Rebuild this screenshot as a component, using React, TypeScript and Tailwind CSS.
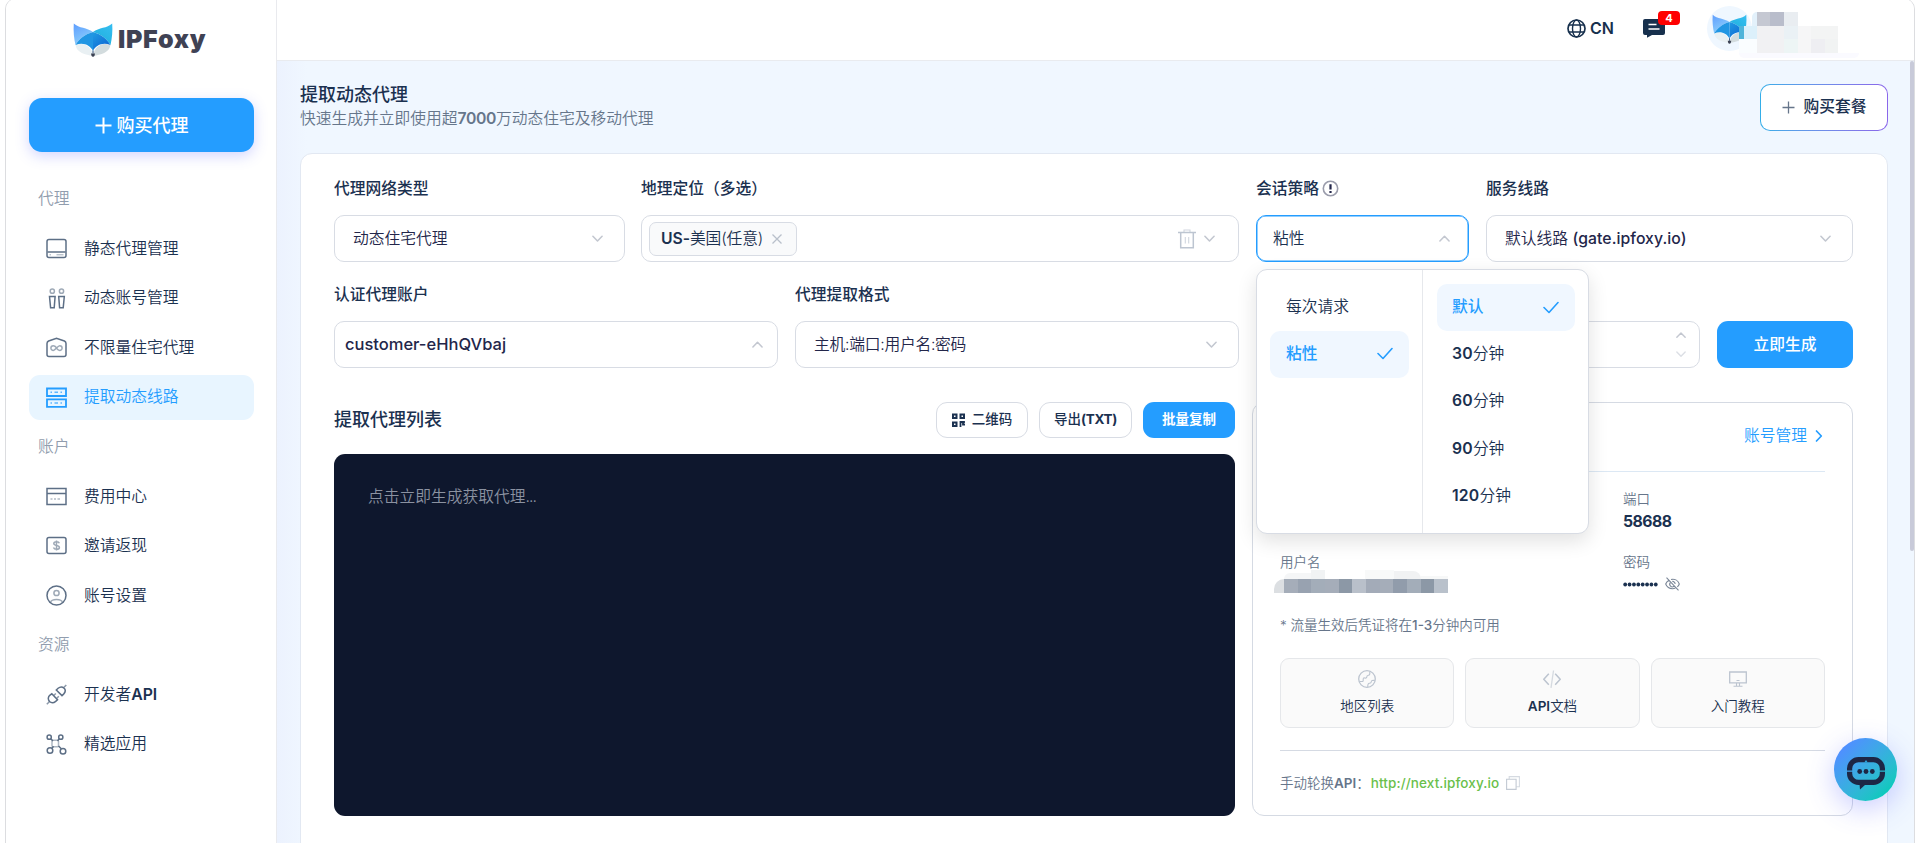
import { type ReactNode } from "react";

const fontStack = "font-['Inter','Noto_Sans_CJK_SC',sans-serif]";

function FoxLogo({ className, id }: { className: string; id: string }) {
  return (
    <svg className={className} viewBox="0 0 40 34" fill="none">
      <defs>
        <linearGradient id={`${id}-a`} x1="0" y1="0" x2="12" y2="22" gradientUnits="userSpaceOnUse">
          <stop stopColor="#5c9bff" />
          <stop offset="1" stopColor="#8fd3fb" />
        </linearGradient>
        <linearGradient id={`${id}-b`} x1="38" y1="2" x2="24" y2="20" gradientUnits="userSpaceOnUse">
          <stop stopColor="#35bdf0" />
          <stop offset="1" stopColor="#1fb0dd" />
        </linearGradient>
        <linearGradient id={`${id}-c`} x1="14" y1="10" x2="28" y2="26" gradientUnits="userSpaceOnUse">
          <stop stopColor="#23a3e6" />
          <stop offset="1" stopColor="#1170d6" />
        </linearGradient>
      </defs>
      <path d="M.8.6C6 5.500 14 4.500 20 9c-8 2-14 7-17.500 13C1 16 .2 8 .8.6Z" fill={`url(#${id}-a)`} />
      <path d="M39.200.6C34 5.500 26 4.500 20 9c8 2 14 7 17.500 13C39 16 39.800 8 39.200.6Z" fill={`url(#${id}-b)`} />
      <path d="M2.500 22C8 19.500 16 21 19 29l1 4C12 31.500 4 30 2.500 22Z" fill="#e9f0f3" />
      <path d="M37.500 22C32 19.500 24 21 21 29l-1 4c8-1.500 16-3 17.500-11Z" fill="#d3dcde" />
      <path d="M20 9C12 11 6 16 2.500 22 10 19 17 22 20 28Z" fill="#2196e3" />
      <path d="M20 9c8 2 14 7 17.500 13C30 19 23 22 20 28Z" fill={`url(#${id}-c)`} />
      <path d="M20 27.500v3" stroke="#2a4d78" strokeWidth="1" />
      <path d="M18 30.500h4l-.5 2.200a1.600 1.600 0 0 1-3 0Z" fill="#3b4152" />
    </svg>
  );
}

type ChevronProps = { dir?: "down" | "up" | "right"; className?: string; size?: number };

function Chevron({ dir = "down", className = "text-[#c3c7d0]", size = 11 }: ChevronProps) {
  const paths = { down: "M1 3.500 6 8.700l5-5.200", up: "M1 8.700 6 3.500l5 5.200", right: "M3.500 1l4.800 5-4.800 5" };
  return (
    <svg width={size} height={size} viewBox="0 0 12 12" fill="none" className={`shrink-0 overflow-visible ${className}`}>
      <path d={paths[dir]} stroke="currentColor" strokeWidth="1.7" strokeLinecap="round" strokeLinejoin="round" />
    </svg>
  );
}

function Check() {
  return (
    <svg width="16" height="13" viewBox="0 0 16 13" fill="none" className="text-[#249dff]">
      <path d="M1 6.500l5 5L15 1.500" stroke="currentColor" strokeWidth="1.600" strokeLinecap="round" strokeLinejoin="round" />
    </svg>
  );
}

const icons: Record<string, ReactNode> = {
  disk: (
    <>
      <rect x="1" y="1.500" width="19" height="18" rx="2" />
      <path d="M1.500 14h18" />
      <path d="M3.500 16.800h1.500M10.500 16.800h7" strokeWidth="1" opacity=".6" />
    </>
  ),
  people: (
    <>
      <circle cx="6.300" cy="3.200" r="2.100" opacity=".6" />
      <circle cx="15.500" cy="3.200" r="2.100" opacity=".6" />
      <path d="M3.500 8.500h5.600l-.9 11.200H4.600ZM12.700 8.500h5.600l-1.100 11.200h-3.600Z" />
    </>
  ),
  home: (
    <>
      <path d="M1 6.500Q1 4.800 2.600 4L10.500 1.200 18.400 4Q20 4.800 20 6.500V17.500a2 2 0 0 1-2 2H3a2 2 0 0 1-2-2Z" />
      <path d="M10.500 10.800c-1-1.300-2-2.100-3.200-2.100a2.400 2.400 0 0 0 0 4.800c2 0 4.400-4.800 6.400-4.800a2.400 2.400 0 0 1 0 4.800c-1.200 0-2.200-.9-3.200-2.200" opacity=".6" />
    </>
  ),
  server: (
    <>
      <path d="M1 1.500h19v7.500H1ZM1 12.300h19v7.500H1Z" strokeWidth="1.8" />
      <path d="M4.500 5.200h1.500M8.500 5.200h3.500M14.500 5.200H16M4.500 16h1.500M8.500 16h3.500M14.500 16H16" opacity=".7" />
    </>
  ),
  card: (
    <>
      <path d="M1 2.500h19v16H1ZM1 7.500h19" />
      <path d="M4.500 13h2M8 13h2M11.500 13h2.500" strokeWidth="1.200" opacity=".7" />
    </>
  ),
  money: (
    <>
      <rect x="1" y="2.500" width="19" height="16" rx="2" />
      <path d="M13.300 8.300c-.3-1.200-1.500-1.600-2.800-1.600-1.600 0-2.700.7-2.700 1.900 0 2.600 5.600 1.200 5.600 3.800 0 1.200-1.200 1.900-2.900 1.900-1.500 0-2.600-.6-3-1.700M10.500 5.500v10" opacity=".6" />
    </>
  ),
  user: (
    <>
      <circle cx="10.500" cy="10.500" r="9.500" />
      <circle cx="10.500" cy="8" r="2.600" opacity=".6" />
      <path d="M4.500 17.500c1-4 11-4 12 0" opacity=".6" />
    </>
  ),
  plug: (
    <>
      <path d="M3.500 17.500c-1.800-2.200-1.500-4.800.5-6.300l1.800-1.400 5.700 6-1.800 1.500c-2 1.700-4.500 1.700-6.200.2ZM10.300 6l1.800-1.700c1.900-1.600 4.200-1.700 5.900-.2 1.600 1.700 1.400 4.200-.4 6l-1.600 1.500Z" />
      <path d="M.8 20.200l2.500-2.500M18 3.300 20.300 1M7.800 11.500l2-2M10.800 14.200l2-2" opacity=".7" />
    </>
  ),
  nodes: (
    <>
      <circle cx="3.200" cy="3.200" r="2.100" />
      <circle cx="14.800" cy="3.200" r="2.100" />
      <circle cx="4" cy="16.500" r="2.800" />
      <circle cx="17" cy="17.300" r="2.800" />
      <path d="M4.800 4.800 7 7M13.200 4.800 11.500 7M6 14.300l1.500-2M15.300 14.800 12.500 12" />
      <rect x="6" y="6.300" width="6.500" height="6.500" rx="1" opacity=".5" />
    </>
  ),
};

type Row = { label: string; icon?: string; suffix?: string; active?: boolean };

const menu: Row[] = [
  { label: "代理" },
  { label: "静态代理管理", icon: "disk" },
  { label: "动态账号管理", icon: "people" },
  { label: "不限量住宅代理", icon: "home" },
  { label: "提取动态线路", icon: "server", active: true },
  { label: "账户" },
  { label: "费用中心", icon: "card" },
  { label: "邀请返现", icon: "money" },
  { label: "账号设置", icon: "user" },
  { label: "资源" },
  { label: "开发者", suffix: "API", icon: "plug" },
  { label: "精选应用", icon: "nodes" },
];

function Sidebar() {
  return (
    <aside className="flex h-full w-[271px] shrink-0 flex-col border-r border-[#e9eaee] bg-white pr-[22px] pl-[23px]">
      <div className="mt-[22px] flex h-[35px] items-center pl-[44px]">
        <FoxLogo id="side" className="h-[34px] w-10" />
        <span className="-mt-px ml-[5px] text-[25px] leading-none font-black tracking-[0.7px] text-[#3f4254]">IPFoxy</span>
      </div>
      <button className="mt-[41px] flex h-[54px] shrink-0 items-center justify-center gap-[5px] rounded-[13px] bg-[#249dff] text-[18px] font-medium text-white shadow-[0_4px_14px_rgba(80,90,255,0.25)]">
        <svg width="17" height="17" viewBox="0 0 17 17" className="stroke-white stroke-2">
          <path d="M8.500.5v16M.5 8.500h16" />
        </svg>
        购买代理
      </button>
      <nav className="mt-[22.3px] flex flex-col text-[15.75px]">
        {menu.map((item) =>
          item.icon ? (
            <div key={item.label} className="flex h-[49.55px] items-center">
              <div
                className={`flex h-[44.6px] w-full items-center rounded-[11px] pl-[17px] ${
                  item.active ? "bg-[#e8f5ff] text-[#249dff]" : "text-[#1b3150]"
                }`}
              >
                <svg
                  width="21"
                  height="21"
                  viewBox="0 0 21 21"
                  fill="none"
                  stroke="currentColor"
                  strokeWidth="1.5"
                  className={item.active ? "text-[#249dff]" : "text-[#5d6f86]"}
                >
                  {icons[item.icon]}
                </svg>
                <span className="ml-[17px]">
                  {item.label}
                  {item.suffix && <span className="font-semibold">{item.suffix}</span>}
                </span>
              </div>
            </div>
          ) : (
            <div key={item.label} className="flex h-[49.55px] items-center pl-[9px] text-[#919dae]">
              {item.label}
            </div>
          ),
        )}
      </nav>
    </aside>
  );
}

function Header() {
  return (
    <header className="flex h-[61px] shrink-0 items-start border-b border-[#e9ebef] bg-white">
      <div className="ml-[1290px] flex h-[56px] items-center text-[#17304d]">
        <svg width="19" height="19" viewBox="0 0 19 19" fill="none" stroke="currentColor" strokeWidth="1.4">
          <circle cx="9.500" cy="9.500" r="8.500" strokeWidth="1.7" />
          <ellipse cx="9.500" cy="9.500" rx="4" ry="8.500" />
          <path d="M2 6h15M2 13h15" />
        </svg>
        <span className="ml-1 text-[16px] font-semibold">CN</span>
      </div>
      <div className="relative mt-[19px] ml-[29px]">
        <svg width="22" height="19" viewBox="0 0 22 19" className="text-[#17304d]">
          <path d="M2 0h18a2 2 0 0 1 2 2v12a2 2 0 0 1-2 2H9l-5 2.800V16H2a2 2 0 0 1-2-2V2A2 2 0 0 1 2 0Z" fill="currentColor" />
          <path d="M5.500 5.500h8M5.500 10h11" stroke="#fff" strokeWidth="1.7" />
        </svg>
        <span className="absolute -top-2 left-[15px] flex h-[14px] w-[22px] items-center justify-center rounded-[4px] bg-[#ff0000] text-[11px] font-bold text-white">
          4
        </span>
      </div>
      <div className="mt-1.5 ml-[42px] flex h-[45px] w-[45px] shrink-0 items-center justify-center rounded-full bg-[#eff7ff]">
        <FoxLogo id="avatar" className="h-[30px] w-[35px]" />
      </div>
      {/* masked account name */}
      <div className="mt-3 -ml-[13px] flex flex-col">
        <div className="ml-[13px] flex h-[14px]">
          <i className="w-[5px] rounded-tl-md bg-[#e3f1fb]" />
          <i className="w-[13px] bg-[#c5c8d2]" />
          <i className="w-[14px] bg-[#b9bdcb]" />
          <i className="w-[14px] bg-[#e9edf1]" />
        </div>
        <div className="flex h-[13px]">
          <i className="w-[5px] bg-[#4fb4da]" />
          <i className="w-[13px] bg-[#dcf0fb]" />
          <i className="w-[27px] bg-[#f1f1f3]" />
          <i className="w-[14px] bg-[#eaf1f5]" />
          <i className="w-[13px] bg-[#f6f6f7]" />
          <i className="w-[27px] bg-[#f3f4f4]" />
        </div>
        <div className="flex h-[14px]">
          <i className="w-[18px] bg-[#fafdff]" />
          <i className="w-[27px] bg-[#f1f1f3]" />
          <i className="w-[14px] bg-[#edf5f5]" />
          <i className="w-[13px] bg-[#f6f6f7]" />
          <i className="w-[14px] bg-[#eeeef2]" />
          <i className="w-[13px] bg-[#f1f3f3]" />
        </div>
        <div className="h-[5px] w-[120px] rounded-b-full bg-[#fafaff]" />
      </div>
    </header>
  );
}

function Label({ children }: { children?: ReactNode }) {
  return <div className="flex h-[27px] items-center text-[15.75px] font-medium text-[#1b3150]">{children}</div>;
}

type SelectProps = { children: ReactNode; dir?: "up" | "down"; className?: string };

function SelectBox({ children, dir, className = "pl-[18px] pr-[21px]" }: SelectProps) {
  return (
    <div className={`mt-[13px] flex h-[47px] items-center justify-between rounded-[10px] border border-[#d8dce4] bg-white text-[15.75px] text-[#23264a] ${className}`}>
      {children}
      <Chevron dir={dir} />
    </div>
  );
}

function SessionMenu() {
  return (
    <div className="absolute top-[94px] left-0 z-20 flex h-[265px] w-[333px] rounded-[11px] border border-[#d8dce4] bg-white text-[15.75px] text-[#1b3150] shadow-[0_7px_20px_rgba(0,0,0,0.12)]">
      <div className="w-[166px] border-r border-[#e6e8ec] px-[13px] pt-[14px]">
        <div className="flex h-[47px] items-center px-4 pb-px">每次请求</div>
        <div className="flex h-[47px] items-center justify-between rounded-[10px] bg-[#f0f7ff] px-4 pb-0.5 font-medium text-[#249dff]">
          粘性 <Check />
        </div>
      </div>
      <div className="flex-1 pt-[14px] pr-[13px] pl-[14px]">
        <div className="flex h-[47px] items-center justify-between rounded-[10px] bg-[#f0f7ff] pr-4 pb-px pl-[15px] font-medium text-[#249dff]">
          默认 <Check />
        </div>
        <div className="-mt-px">
          {["30", "60", "90", "120"].map((m) => (
            <div key={m} className="flex h-[47.4px] items-center px-[15px]">
              <span className="font-semibold tracking-[0.2px]">{m}</span>分钟
            </div>
          ))}
        </div>
      </div>
    </div>
  );
}

function Filters() {
  return (
    <>
      <div className="flex gap-[17px]">
        <div className="w-[291px]">
          <Label>代理网络类型</Label>
          <SelectBox>动态住宅代理</SelectBox>
        </div>
        <div className="-ml-px w-[598px]">
          <Label>地理定位（多选）</Label>
          <SelectBox className="pr-[23px] pl-[7px]">
            <div className="flex h-[34px] w-[148px] items-center justify-between rounded-[7px] border border-[#d8dce4] bg-[#f9fafb] pr-[14px] pl-[11px] text-[#1b3150]">
              <span className="tracking-[-0.1px]">
                <span className="font-semibold">US-</span>美国(任意)
              </span>
              <svg width="10" height="10" viewBox="0 0 10 10" className="stroke-[#b9c0ca]" strokeWidth="1.3">
                <path d="M.5.5l9 9M9.500.5l-9 9" />
              </svg>
            </div>
            <svg width="18" height="20" viewBox="0 0 18 20" fill="none" stroke="#bdc5d1" strokeWidth="1.5" className="mr-2 ml-auto">
              <path d="M0 3.500h18M2.700 3.500v15.300h12.600V3.500" />
              <path d="M6 3.500V1h6v2.500M7.300 8v6.500M10.700 8v6.500" strokeWidth="1.1" opacity=".7" />
            </svg>
          </SelectBox>
        </div>
        <div className="relative w-[213px]">
          <Label>
            会话策略
            <svg width="17" height="17" viewBox="0 0 17 17" fill="none" className="ml-[3px]">
              <circle cx="8.500" cy="8.500" r="7.200" stroke="#9a9cab" strokeWidth="1.6" />
              <path d="M8.500 4.300v5.200M8.500 11v2" stroke="#23264a" strokeWidth="2.2" />
            </svg>
          </Label>
          <div className="mt-[13px] flex h-[47px] items-center justify-between rounded-[10px] border-[1.5px] border-[#249dff] bg-white pr-[18px] pl-4 text-[15.75px] text-[#1b3150] ring-[0.5px] ring-[#249dff] ring-inset">
            粘性 <Chevron dir="up" />
          </div>
          <SessionMenu />
        </div>
        <div className="w-[367px]">
          <Label>服务线路</Label>
          <SelectBox>
            <span>
              默认线路 <span className="font-medium tracking-[0.05px]">(gate.ipfoxy.io)</span>
            </span>
          </SelectBox>
        </div>
      </div>

      <div className="mt-[19px] flex gap-[17px]">
        <div className="w-[444px]">
          <Label>认证代理账户</Label>
          <SelectBox dir="up" className="pr-[14px] pl-[10px]">
            <span className="text-[16.5px] font-medium">customer-eHhQVbaj</span>
          </SelectBox>
        </div>
        <div className="w-[444px]">
          <Label>代理提取格式</Label>
          <SelectBox>
            <span className="tracking-[-0.25px]">主机:端口:用户名:密码</span>
          </SelectBox>
        </div>
        <div className="w-[444px]">
          <Label />
          <div className="mt-[13px] flex h-[47px] flex-col items-end justify-center gap-[9px] rounded-[10px] border border-[#d8dce4] pr-[13px]">
            <Chevron dir="up" size={10} />
            <Chevron size={10} className="text-[#dcdfe5]" />
          </div>
        </div>
        <button className="mt-10 h-[47px] w-[136px] rounded-[11px] bg-[#249dff] text-[15.75px] font-medium text-white">立即生成</button>
      </div>
    </>
  );
}

function ResultList() {
  return (
    <div className="w-[901px]">
      <div className="flex h-9 items-center text-[13.5px] font-medium text-[#1b3150]">
        <h2 className="mr-auto pb-px text-[18px] font-medium">提取代理列表</h2>
        <button className="flex h-9 w-[92px] items-center justify-center gap-[7px] rounded-[11px] border border-[#d8dce4] pb-px">
          <svg width="13" height="14" viewBox="0 0 13 14" fill="none" stroke="currentColor" strokeWidth="2">
            <path d="M1 1.500h3.500V5H1ZM8.500 1.500H12V5H8.500ZM1 9.500h3.500V13H1Z" />
            <path d="M8.500 14V9H11v2.500h2M12 8v2" strokeWidth="1.8" />
          </svg>
          二维码
        </button>
        <button className="ml-[11px] h-9 w-[93px] rounded-[11px] border border-[#d8dce4] pb-px">
          导出<span className="font-bold tracking-[-0.3px]">(TXT)</span>
        </button>
        <button className="ml-[11px] h-9 w-[92px] rounded-[11px] bg-[#249dff] pb-px font-bold text-white">批量复制</button>
      </div>
      <div className="mt-4 h-[362px] rounded-[11px] bg-[#0e172d] px-[34px] pt-[31px] text-[15.75px] text-[#8b92a1]">
        点击立即生成获取代理<span className="tracking-[-0.9px]">...</span>
      </div>
    </div>
  );
}

const docs: { label: ReactNode; key: string; icon: ReactNode }[] = [
  {
    key: "region",
    label: "地区列表",
    icon: (
      <>
        <circle cx="9" cy="9" r="8.300" />
        <path d="M1.500 11.500h2.700q1.200 0 1-1.500-.3-2.500 1.500-2 1.800.5 2-.8.100-1.700 1.700-1.900 1.900-.2 1.300-3.800M9.800 17q-.3-3.700 1.700-3.700 1.600 0 1.700-1.300.2-2 3.600-1.600" strokeWidth="1.1" />
      </>
    ),
  },
  {
    key: "api",
    label: (
      <>
        <span className="font-semibold">API</span>文档
      </>
    ),
    icon: (
      <>
        <path d="M5.800 3.800.8 9.300l5 5.500M12.200 3.800l5 5.500-5 5.500" strokeWidth="1.5" />
        <path d="M10.500.5 8 17.800" opacity=".6" />
      </>
    ),
  },
  {
    key: "course",
    label: "入门教程",
    icon: (
      <>
        <path d="M.7 2h16.600v10.800H.7Z" />
        <path d="M7.500 13v2.800M10.500 13v2.800M4.500 16.200h9M7.500 10.500h3" strokeWidth="1.1" />
      </>
    ),
  },
];

const maskRow = ["bg-[#a5adb9]", "bg-[#98a2b0]", "bg-[#a3adb9]", "bg-[#a5adb9]", "bg-[#8c98a6]", "bg-[#b9c0ca]", "bg-[#a3abb8]", "bg-[#a5adb9]", "bg-[#919cab]", "bg-[#a3adb9]", "bg-[#8c98a6]", "bg-[#b9c1cb]"];

function Credentials() {
  return (
    <div className="flex h-[414px] w-[601px] flex-col rounded-[12px] border border-[#d5dae3] px-[27px] text-[13.5px] text-[#66758a]">
      <div className="flex h-[69px] shrink-0 items-center justify-end gap-1.5 border-b border-[#dce8f4] pb-0.5 text-[15.75px] text-[#249dff]">
        账号管理
        <Chevron dir="right" size={12} className="text-[#249dff]" />
      </div>
      <div className="mt-[17px] grid grid-cols-[343px_1fr]">
        <div className="h-[63px]" />
        <div className="h-[63px]">
          <div className="h-5 leading-5">端口</div>
          <div className="mt-px text-[15.75px] leading-6 font-bold tracking-[-0.5px] text-[#1b3150]">58688</div>
        </div>
        <div className="h-[63px]">
          <div className="h-5 leading-5">用户名</div>
          <div className="-mt-0.5 -ml-1.5 flex flex-col">
            <div className="flex h-[9px] items-end pl-[10px]">
              <i className="h-[6px] w-[27px] rounded-tl-full bg-[#f5f6f7]" />
              <i className="h-[9px] w-[14px] bg-[#f1f3f4]" />
              <i className="ml-[40px] h-[9px] w-[29px] bg-[#f8f9f9]" />
              <i className="h-[8px] w-[27px] rounded-tr-full bg-[#f1f2f3]" />
              <i className="h-[3px] w-[27px] bg-[#f7f8f8]" />
            </div>
            <div className="flex h-[14px]">
              <i className="w-[10px] rounded-tl-full bg-[#dcdfe2]" />
              {maskRow.map((c, i) => (
                <i key={i} className={`w-[13.66px] ${c}`} />
              ))}
            </div>
          </div>
        </div>
        <div className="h-[63px]">
          <div className="h-5 leading-5">密码</div>
          <div className="mt-px flex h-[22px] items-center gap-[7px]">
            <svg width="35" height="5" viewBox="0 0 35 5" fill="#1b3150">
              {[0, 1, 2, 3, 4, 5, 6, 7].map((i) => (
                <circle key={i} cx={2.2 + i * 4.37} cy="2.5" r="1.9" />
              ))}
            </svg>
            <svg width="15" height="14" viewBox="0 0 15 14" fill="none" stroke="#7b8798" strokeWidth="1.1">
              <path d="M4 3.200C2.400 4 1.200 5.500.7 7c1.100 2.800 3.600 4.700 6.800 4.700 1 0 2-.2 2.900-.6M6 2.500c4-.8 7.200 1.300 8.300 4.500-.4 1.100-1.100 2.100-2 2.900M5.300 5.700A2.600 2.600 0 0 0 9 9.300M7.300 4.400a2.600 2.600 0 0 1 2.800 2.700M1.500.7l12 12.600" />
            </svg>
          </div>
        </div>
      </div>
      <div className="flex h-5 items-center whitespace-pre">
        * 流量生效后凭证将在<span className="font-medium">1-3</span>分钟内可用
      </div>
      <div className="mt-[23px] grid grid-cols-3 gap-[11px]">
        {docs.map((d) => (
          <div key={d.key} className="flex h-[70px] flex-col items-center rounded-[9px] border border-[#e5e7ea] bg-[#fafafa] pt-[11px] text-[#1b3150]">
            <svg width="18" height="18" viewBox="0 0 18 18" fill="none" stroke="#bcc4cf" strokeWidth="1.3">
              {d.icon}
            </svg>
            <span className="mt-2 leading-5">{d.label}</span>
          </div>
        ))}
      </div>
      <div className="mt-[22px] flex h-[69px] items-center border-t border-[#d5dae3]">
        手动轮换<span className="font-semibold">API</span>
        <span>：</span>
        <span className="ml-px font-medium tracking-[0.1px] text-[#6abf4b]">http://next.ipfoxy.io</span>
        <svg width="14" height="14" viewBox="0 0 14 14" fill="none" stroke="#c3cad4" strokeWidth="1.1" className="ml-[7px]">
          <path d="M.6 3.200h9.500v10.200H.6Z" />
          <path d="M3.200 3V.6h10.200v10.200H10.300" opacity=".7" />
        </svg>
      </div>
    </div>
  );
}

export default function App() {
  return (
    <div className={`flex h-[843px] w-[1917px] items-start overflow-hidden bg-white leading-normal font-[350] ${fontStack}`}>
      <div className="relative -mt-0.5 ml-[5px] flex h-[860px] w-[1910px] shrink-0 overflow-hidden rounded-t-[11px] border border-[#dcdde0] pt-px">
        <Sidebar />
        <div className="flex w-[1637px] shrink-0 flex-col">
          <Header />
          <main className="flex-1 bg-linear-to-r from-[#ecf2fe] to-[#f0f7ff] to-[30px] pr-[26px] pl-[23px]">
            <div className="flex justify-between pt-[22px]">
              <div>
                <h1 className="h-[23px] text-[18px] leading-[23px] font-medium text-[#1b3150]">提取动态代理</h1>
                <p className="mt-[1px] text-[15.75px] leading-6 text-[#66768b]">
                  快速生成并立即使用超<span className="font-semibold tracking-[-0.4px]">7000</span>万动态住宅及移动代理
                </p>
              </div>
              <div className="mt-px -mb-px h-[47px] rounded-[10px] bg-linear-to-r from-[#33aee8] to-[#8a66ea] p-px">
                <button className="flex h-[45px] w-[126px] items-center justify-center gap-[9px] rounded-[9px] bg-white pb-px text-[15.75px] font-medium text-[#1b3150]">
                  <svg width="13" height="13" viewBox="0 0 13 13" className="stroke-[#66758a]" strokeWidth="1.3">
                    <path d="M6.500.5v12M.5 6.500h12" />
                  </svg>
                  购买套餐
                </button>
              </div>
            </div>
            <section className="mt-[22px] h-[720px] rounded-[12px] border border-[#e2e8f2] bg-white px-[33px] pt-[21px]">
              <Filters />
              <div className="mt-[34px] flex gap-[17px]">
                <ResultList />
                <Credentials />
              </div>
            </section>
          </main>
        </div>
        {/* page scrollbar */}
        <div className="absolute top-[62px] right-0 h-[490px] w-1 rounded-full bg-[#c8cad9]" />
        <button className="absolute top-[739px] left-[1828px] z-30 flex h-[63px] w-[63px] items-center justify-center rounded-full bg-linear-to-br from-[#4f8fff] from-15% to-[#0cc9bd] to-85% shadow-[0_8px_28px_rgba(80,90,255,0.3)]">
          <svg width="38" height="33" viewBox="0 0 38 33" fill="none" className="mt-2">
            <path d="M2.600 13.400V11.600a9 9 0 0 1 9-9h14.800a9 9 0 0 1 9 9v1.800M2.600 14.800v1.600a9 9 0 0 0 9 9h14.800a9 9 0 0 0 9-9v-1.600" stroke="#1d2745" strokeWidth="5.2" />
            <path d="M12.500 27h6.500l-6 5.500Z" fill="#1d2745" />
            <path d="M17.300 5.500 19 3l1.700 2.500Z" fill="#2ba9de" />
            <circle cx="12.700" cy="14.500" r="2.400" fill="#1d2745" />
            <circle cx="19" cy="14.500" r="2.400" fill="#1d2745" />
            <circle cx="25.300" cy="14.500" r="2.400" fill="#1d2745" />
          </svg>
        </button>
      </div>
    </div>
  );
}
